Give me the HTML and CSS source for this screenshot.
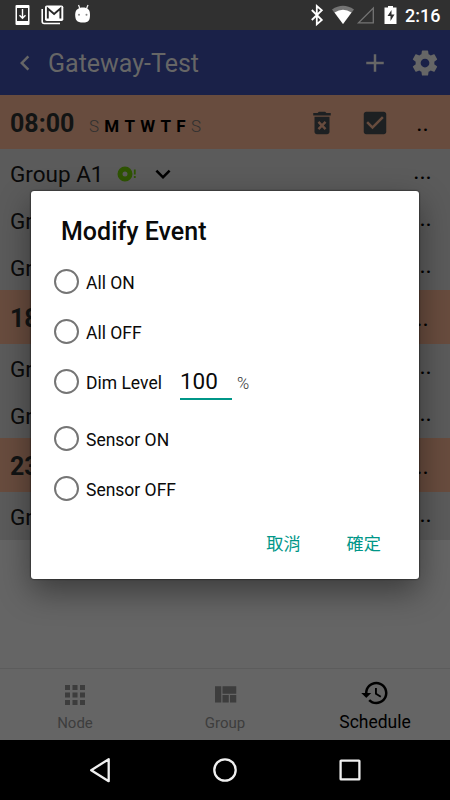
FILE: index.html
```html
<!DOCTYPE html>
<html lang="zh-Hant">
<head>
<meta charset="utf-8">
<title>Gateway-Test</title>
<link rel="stylesheet" href="styles.css">
</head>
<body>
<div class="screen">
  <div class="status">
    <svg class="status-left" viewBox="0 0 100 30">
      <rect x="15.5" y="5" width="14" height="20" rx="1" fill="#fff"/>
      <rect x="17" y="8" width="11" height="13" fill="#2c2c2c"/>
      <path d="M22.5 9v9M19.5 15.2l3 3 3-3" fill="none" stroke="#fff" stroke-width="1.4"/>
      <path d="M42.2 9v12.500a2 2 0 0 0 2 2H60" fill="none" stroke="#fff" stroke-width="1.600"/>
      <rect x="45" y="5.500" width="18.300" height="15.600" rx="1.800" fill="#fff"/>
      <path d="M47.800 18.500V8.600l6.300 5.400 6.300-5.400v9.900" fill="none" stroke="#282828" stroke-width="1.900"/>
      <path d="M78.500 5l1.600 4M88 5l-1.600 4" stroke="#eee" stroke-width="1.300"/>
      <path d="M75.200 14.500c0-5 3.300-7 7.800-7s7 2 7 7c0 5.500-1 8-7 8-6.500 0-7.800-2.500-7.800-8z" fill="#fff"/>
      <circle cx="79" cy="14.700" r="1" fill="#888"/><circle cx="86.500" cy="14.700" r="1" fill="#888"/>
    </svg>
    <svg class="status-right" viewBox="0 0 90 30">
      <path d="M1.800 10l10 10-5 4.200V6l5 4.200-10 9.800" fill="none" stroke="#fff" stroke-width="1.800"/>
      <path d="M22 9.500Q33 2 44 9.500L33 24z" fill="#747474"/>
      <path d="M24.500 12.500Q33 7 41.500 12.500L33 24z" fill="#fff"/>
      <path d="M48.500 22.800H63.300V8z" fill="none" stroke="#747474" stroke-width="1.300"/>
      <path d="M74.500 7.500h3.500V6h5v1.500h3.500v16.500h-12z" fill="#fff"/>
      <path d="M81.500 10l-4 6h3v5l4-6.500h-3z" fill="#303030"/>
    </svg>
    <span class="clock">2:16</span>
  </div>

  <header class="appbar">
    <svg class="icon" viewBox="0 0 24 24"><path d="M15.410 7.410L14 6l-6 6 6 6 1.410-1.410L10.830 12z"/></svg>
    <h1>Gateway-Test</h1>
    <svg class="icon" viewBox="0 0 24 24"><path d="M19 13h-6v6h-2v-6H5v-2h6V5h2v6h6v2z"/></svg>
    <svg class="icon gear" viewBox="0 0 24 24"><path d="M19.430 12.980c.04-.32.07-.64.07-.98s-.03-.66-.07-.98l2.110-1.650c.19-.15.24-.42.12-.64l-2-3.460c-.12-.22-.39-.3-.61-.22l-2.490 1c-.52-.4-1.080-.73-1.690-.98l-.38-2.650C14.460 2.180 14.250 2 14 2h-4c-.25 0-.46.18-.49.42l-.38 2.650c-.61.25-1.170.59-1.690.98l-2.490-1c-.23-.09-.49 0-.61.22l-2 3.460c-.13.22-.07.49.12.64l2.110 1.650c-.04.32-.07.65-.07.98s.03.66.07.98l-2.110 1.650c-.19.15-.24.42-.12.64l2 3.460c.12.22.39.3.61.22l2.490-1c.52.4 1.080.73 1.690.98l.38 2.650c.03.24.24.42.49.42h4c.25 0 .46-.18.49-.42l.38-2.650c.61-.25 1.170-.59 1.690-.98l2.490 1c.23.09.49 0 .61-.22l2-3.460c.12-.22.07-.49-.12-.64l-2.110-1.650zM12 15.500c-1.930 0-3.500-1.570-3.500-3.500s1.570-3.500 3.500-3.500 3.500 1.570 3.500 3.500-1.570 3.500-3.500 3.500z"/></svg>
  </header>

  <main class="list">
    <div class="event">
      <span class="time">08:00</span>
      <span class="days"><i>S</i><b>M</b><b>T</b><b>W</b><b>T</b><b>F</b><i>S</i></span>
      <svg class="icon trash" viewBox="0 0 24 24"><path d="M6 19c0 1.100.9 2 2 2h8c1.100 0 2-.9 2-2V7H6v12zm2.460-7.120l1.410-1.410L12 12.590l2.120-2.120 1.410 1.410L13.410 14l2.120 2.120-1.410 1.410L12 15.410l-2.120 2.120-1.410-1.410L10.590 14l-2.130-2.120zM15.500 4l-1-1h-5l-1 1H5v2h14V4z"/></svg>
      <svg class="icon check" viewBox="0 0 24 24"><path d="M19 3H5c-1.110 0-2 .9-2 2v14c0 1.100.89 2 2 2h14c1.110 0 2-.9 2-2V5c0-1.100-.89-2-2-2zm-9 14l-5-5 1.410-1.410L10 14.170l7.590-7.590L19 8l-9 9z"/></svg>
      <span class="more">..</span>
    </div>
    <div class="group">
      <span class="name">Group A1</span>
      <svg class="lamp" viewBox="0 0 20 16"><circle cx="8" cy="8" r="5" fill="none" stroke="#2f5403" stroke-width="5"/><path d="M17.800 3.500v5M17.800 10v2" stroke="#2f5403" stroke-width="1.800"/></svg>
      <svg class="icon caret" viewBox="0 0 24 24"><path d="M16.590 8.590L12 13.170 7.410 8.590 6 10l6 6 6-6z"/></svg>
      <span class="more">...</span>
    </div>
    <div class="group"><span class="name">Gr</span><span class="more">...</span></div>
    <div class="group"><span class="name">Gr</span><span class="more">...</span></div>
    <div class="event"><span class="time">18</span><span class="more">..</span></div>
    <div class="group"><span class="name">Gr</span><span class="more">...</span></div>
    <div class="group"><span class="name">Gr</span><span class="more">...</span></div>
    <div class="event"><span class="time">23</span><span class="more">..</span></div>
    <div class="group last"><span class="name">Gr</span><span class="more">...</span></div>
  </main>

  <nav class="tabs">
    <div class="tab">
      <svg class="icon" viewBox="0 0 24 24"><path d="M4 8h4V4H4v4zm6 12h4v-4h-4v4zm-6 0h4v-4H4v4zm0-6h4v-4H4v4zm6 0h4v-4h-4v4zm6-10v4h4V4h-4zm-6 4h4V4h-4v4zm6 6h4v-4h-4v4zm0 6h4v-4h-4v4z"/></svg>
      <span>Node</span>
    </div>
    <div class="tab">
      <svg class="icon" viewBox="0 0 24 24"><path d="M10 18h5v-6h-5v6zm-6 0h5V5H4v13zm12 0h5v-6h-5v6zM10 5v6h11V5H10z"/></svg>
      <span>Group</span>
    </div>
    <div class="tab active">
      <svg class="icon" viewBox="0 0 24 24"><path d="M13 3c-4.970 0-9 4.030-9 9H1l3.890 3.890.07.14L9 12H6c0-3.870 3.130-7 7-7s7 3.130 7 7-3.130 7-7 7c-1.930 0-3.680-.79-4.940-2.060l-1.420 1.420C8.270 19.990 10.510 21 13 21c4.970 0 9-4.030 9-9s-4.030-9-9-9zm-1 5v5l4.280 2.540.72-1.210-3.500-2.080V8H12z"/></svg>
      <span>Schedule</span>
    </div>
  </nav>

  <div class="sysnav">
    <svg viewBox="0 0 30 30"><path d="M23.700 4.200v22L6.200 15.200z"/></svg>
    <svg viewBox="0 0 30 30"><circle cx="15" cy="15" r="10.700"/></svg>
    <svg viewBox="0 0 30 30"><rect x="5.600" y="5.600" width="18.800" height="18.800" rx=".5"/></svg>
  </div>

  <div class="dialog">
    <h2>Modify Event</h2>
    <div class="option"><span class="radio"></span><span>All ON</span></div>
    <div class="option"><span class="radio"></span><span>All OFF</span></div>
    <div class="option dim"><span class="radio"></span><span>Dim Level</span><span class="level">100</span><span class="unit">%</span></div>
    <div class="option"><span class="radio"></span><span>Sensor ON</span></div>
    <div class="option"><span class="radio"></span><span>Sensor OFF</span></div>
    <div class="actions"><span>取消</span><span>確定</span></div>
  </div>
</div>
</body>
</html>
```
FILE: styles.css
```css
* { box-sizing: border-box; }
body { margin: 0; background: #656565; }
.screen {
  position: relative;
  width: 450px;
  height: 800px;
  overflow: hidden;
  display: flex;
  flex-direction: column;
  font-family: Roboto, "Noto Sans CJK TC", sans-serif;
  color: #0a0a0a;
}
.icon { width: 30px; height: 30px; flex: none; fill: currentColor; }

.status { height: 30px; flex: none; display: flex; background: #303030; color: #fff; }
.status-left { width: 100px; height: 30px; }
.status-right { width: 90px; height: 30px; margin-left: 210px; }
.clock { margin-left: 5px; font-size: 18px; font-weight: 500; line-height: 31px; }

.appbar {
  height: 65px;
  flex: none;
  display: flex;
  align-items: center;
  padding: 0 10px;
  background: #1a2148;
  color: #666;
}
.appbar h1 { flex: 1; margin: 0 0 0 8px; font-size: 25px; font-weight: 400; line-height: 30px; padding-top: 2px; }
.gear { margin-left: 20px; }

.list { flex: 1; }
.event, .group { display: flex; align-items: center; padding-left: 10px; }
.event { height: 54px; background: #684c3e; }
.group { height: 47px; background: #5b5b5b; }
.group.last { height: 48px; }
.time { width: 79px; font-size: 25px; font-weight: 700; color: #121414; padding-top: 3px; }
.days { width: 112px; display: flex; justify-content: space-between; font-size: 17px; padding-top: 8px; }
.days i { font-style: normal; font-weight: 300; color: #303030; }
.days b { color: #000; }
.trash, .check { color: #1d2022; margin-top: 2px; }
.trash { margin-left: 106px; }
.check { margin-left: 23px; }
.name { font-size: 22.5px; padding-top: 2px; }
.lamp { width: 20px; height: 16px; margin: 2px 0 0 13px; }
.caret { margin: 3px 0 0 11px; color: #000; }
.more { width: 55px; margin-left: auto; text-align: center; font-size: 23.5px; color: #000; }
.group .more { margin-top: -4px; }
.event .more { padding-top: 2px; }

.tabs { height: 72px; flex: none; display: flex; border-top: 1px solid #5c5c5c; color: #3d3d3d; }
.tab { width: 150px; display: flex; flex-direction: column; align-items: center; padding-top: 11px; font-size: 15px; line-height: 18px; }
.tab span { margin-top: 4px; }
.tab.active { color: #000; font-size: 17.5px; padding-top: 9px; }
.tab.active span { margin-top: 5px; }

.sysnav { height: 60px; flex: none; display: flex; justify-content: center; gap: 95px; align-items: center; background: #000; }
.sysnav svg { width: 30px; height: 30px; fill: none; stroke: #f0f0f0; stroke-width: 2.3; stroke-linejoin: round; }

.dialog {
  position: absolute;
  left: 31px;
  top: 191px;
  width: 388px;
  height: 388px;
  padding: 26px 23px 0;
  border-radius: 3px;
  background: #fff;
  box-shadow: 0 0 2px #000, 0 12px 32px rgba(0, 0, 0, .42);
  color: #0a0a0a;
}
.dialog h2 { margin: 0 0 15px 7px; font-size: 25px; font-weight: 500; line-height: 30px; height: 30px; }
.option { display: flex; align-items: center; height: 40px; margin-bottom: 10px; font-size: 17.5px; }
.option > span:nth-child(2) { padding-top: 1px; }
.radio { width: 25px; height: 25px; margin-right: 7px; margin-top: -1px; border: 2.5px solid #757575; border-radius: 50%; }
.dim { margin-bottom: 17px; }
.level { width: 52px; height: 36px; margin: -1px 0 0 18px; border-bottom: 2px solid #009688; font-size: 22.5px; line-height: 34px; }
.unit { margin-left: 5px; padding-top: 2px; font-size: 16.5px; font-weight: 300; color: #333; }
.actions { display: flex; justify-content: flex-end; gap: 46px; margin-top: 23px; padding-right: 15px; font-size: 17.2px; line-height: 24px; color: #009688; }
```
